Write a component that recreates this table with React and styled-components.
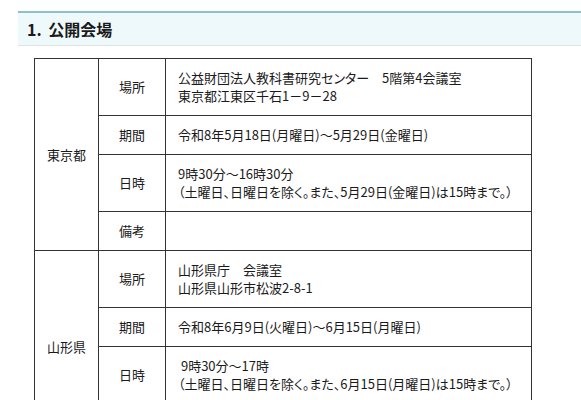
import React from "react";
import styled, { createGlobalStyle } from "styled-components";

const Global = createGlobalStyle`
  html, body { margin: 0; padding: 0; background: #fff; }
  body {
    font-family: "Noto Sans CJK JP", "Liberation Sans", sans-serif;
    color: #1a1a1a;
  }
`;

const Page = styled.div`
  padding: 11px 0 0 18px;
  width: 563px;
  overflow: hidden;
`;

const Heading = styled.h2`
  margin: 0;
  height: 32px;
  box-sizing: content-box;
  border-top: 2px solid #8fc0c4;
  border-bottom: 1px solid #dde3e1;
  background: #eef9fc;
  padding-left: 9px;
  display: flex;
  align-items: center;
  font-size: 16px;
  font-weight: bold;
  color: #1a1a1a;
  word-spacing: 3px;
`;

const Table = styled.table`
  margin: 12px 0 0 16px;
  border-collapse: collapse;
  width: 497px;
  table-layout: fixed;
  font-size: 13px;
  line-height: 18px;
  border: 1px solid #333;
  font-feature-settings: "palt";
`;

const Cell = styled.td`
  border: 1px solid #333;
  padding: 10px 12px;
  vertical-align: middle;
  text-align: ${(p) => (p.$center ? "center" : "left")};
  color: #1a1a1a;
  white-space: nowrap;
  overflow: hidden;
`;

const Col = styled.col`
  width: ${(p) => p.$w}px;
`;

const data = [
  {
    pref: "東京都",
    rows: [
      ["場所", ["公益財団法人教科書研究センター　5階第4会議室", "東京都江東区千石1－9－28"]],
      ["期間", ["令和8年5月18日(月曜日)～5月29日(金曜日)"]],
      ["日時", ["9時30分～16時30分", "（土曜日、日曜日を除く。また、5月29日(金曜日)は15時まで。）"]],
      ["備考", [""]],
    ],
  },
  {
    pref: "山形県",
    rows: [
      ["場所", ["山形県庁　会議室", "山形県山形市松波2-8-1"]],
      ["期間", ["令和8年6月9日(火曜日)～6月15日(月曜日)"]],
      ["日時", ["\u00a09時30分～17時", "（土曜日、日曜日を除く。また、6月15日(月曜日)は15時まで。）"]],
      ["備考", [""]],
    ],
  },
];

export default function App() {
  return (
    <>
      <Global />
      <Page>
        <Heading>1. 公開会場</Heading>
        <Table>
          <colgroup>
            <Col $w={64} />
            <Col $w={67} />
            <Col $w={366} />
          </colgroup>
          <tbody>
            {data.map((g) =>
              g.rows.map(([label, lines], i) => (
                <tr key={g.pref + label}>
                  {i === 0 && (
                    <Cell $center rowSpan={g.rows.length}>
                      {g.pref}
                    </Cell>
                  )}
                  <Cell $center>{label}</Cell>
                  <Cell>
                    {lines.map((l, j) => (
                      <React.Fragment key={j}>
                        {j > 0 && <br />}
                        {l || "\u00a0"}
                      </React.Fragment>
                    ))}
                  </Cell>
                </tr>
              ))
            )}
          </tbody>
        </Table>
      </Page>
    </>
  );
}
